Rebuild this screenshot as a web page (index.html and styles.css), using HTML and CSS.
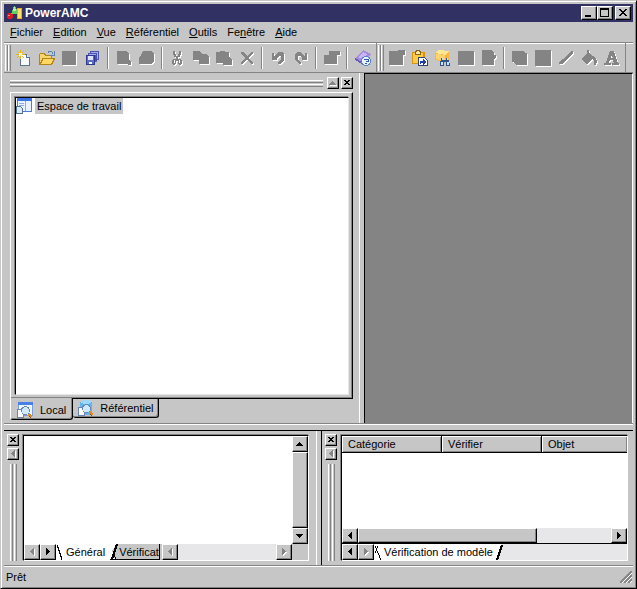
FILE: index.html
```html
<!DOCTYPE html>
<html lang="fr">
<head>
<meta charset="utf-8">
<title>PowerAMC</title>
<link rel="stylesheet" href="styles.css">
</head>
<body>
<svg class="defs" aria-hidden="true">
  <symbol id="left" viewBox="0 0 8 8"><path d="M5 0h1v7H5V6H4V5H3V4H2V3h1V2h1V1h1z"/></symbol>
  <symbol id="right" viewBox="0 0 8 8"><path d="M2 0h1v1h1v1h1v1h1v1H5v1H4v1H3v1H2z"/></symbol>
  <symbol id="up" viewBox="0 0 8 8"><path d="M3 2h1v1h1v1h1v1h1v1H0V5h1V4h1V3h1z"/></symbol>
  <symbol id="down" viewBox="0 0 8 8"><path d="M0 2h7v1H6v1H5v1H4v1H3V5H2V4H1V3H0z"/></symbol>
  <symbol id="cross" viewBox="0 0 8 8"><path d="M1 1h2v1h2V1h2v1H6v1H5v1h1v1h1v1H5V5H3v1H1V5h1V4h1V3H2V2H1z"/></symbol>
  <symbol id="lens" viewBox="0 0 16 16">
    <path fill="#fff" stroke="#6b84b5" d="M.5 7.500h4l2 2v6h-6z"/>
    <circle cx="8.500" cy="8.500" r="4" fill="#cdeaff" stroke="#6b84b5"/>
    <path stroke="#e08a28" stroke-width="3" d="M11.500 12l3 3"/>
    <path stroke="#8c4a10" d="M12 14l2 2"/>
  </symbol>
</svg>
<div class="window">
  <header class="titlebar">
    <svg class="logo" viewBox="0 0 16 16"><circle cx="4" cy="11" r="3.200" fill="#d61c24"/><path d="M2 10h2" stroke="#ff8080"/><path d="M8 1h1l4 8H5z" fill="#63ce63"/><path d="M8 2h1l1 4H7z" fill="#b5efb5"/><path d="M11 3h5v11h-5z" fill="#f7a521"/><path d="M12 4h3v9h-3z" fill="#ffde63"/></svg>
    <h1>PowerAMC</h1>
    <button class="cap" aria-label="Réduire"><svg viewBox="0 0 12 10"><path d="M2 7h6v2H2z"/></svg></button>
    <button class="cap" aria-label="Agrandir"><svg viewBox="0 0 12 10"><path fill-rule="evenodd" d="M1 0h9v9H1z M2 2v6h7V2z"/></svg></button>
    <button class="cap close" aria-label="Fermer"><svg viewBox="0 0 12 10"><path d="M2 1h2v1h1v1h2V2h1V1h2v1H9v1H8v1H7v1h1v1h1v1h1v1H8V7H7V6H5v1H4v1H2V7h1V6h1V5h1V4H4V3H3V2H2z"/></svg></button>
  </header>
  <nav class="menu">
    <a href="#"><u>F</u>ichier</a><a href="#"><u>E</u>dition</a><a href="#"><u>V</u>ue</a><a href="#"><u>R</u>éférentiel</a><a href="#"><u>O</u>utils</a><a href="#">Fe<u>n</u>être</a><a href="#"><u>A</u>ide</a>
  </nav>
  <div class="toolbars">
    <div class="toolbar">
      <span class="grip"></span>
      <button aria-label="Nouveau"><svg viewBox="0 0 16 16"><path d="M4.500 4.500h6l3 3v8h-9z" fill="#f7fbff" stroke="#5a7394"/><path d="M10.500 4.500v3h3" fill="#cfe0f5" stroke="#5a7394"/><path d="M4.500 0v9M0 4.500h9M1 1l7 7M8 1L1 8" stroke="#e5b520"/><path d="M3 3h3v3H3z" fill="#fff7a8"/></svg></button>
      <button aria-label="Ouvrir"><svg viewBox="0 0 16 16"><path d="M.5 14.500v-10l1-1h4l1 2h6v3" fill="#f7d66b" stroke="#b58418"/><path d="M1 14.500l3-6h11.500l-3 6z" fill="#ffd863" stroke="#b58418"/><path d="M9 2.500c2-2 4-1 5 1M15 1v4h-4" fill="none" stroke="#5a84ad"/></svg></button>
      <button disabled aria-label="Enregistrer"><svg viewBox="0 0 16 16"><path d="M0 1h14v14H0z"/></svg></button>
      <button aria-label="Enregistrer tout"><svg viewBox="0 0 16 16"><path d="M5 1h9v9h-2v2h-2v3H1V6h2V3h2z" fill="#5260bd"/><path d="M5.500 1.500h8v8h-2v-6h-6zM3.500 3.500h8v7h-1v-5h-7z" fill="#a5adf2" stroke="#4a52ad"/><path d="M1.500 5.500h8v9h-8z" fill="#5a6bce" stroke="#31398c"/><path d="M3 6h5v4H3z" fill="#dce2ff"/><path d="M4 12h3v2H4z" fill="#fff"/></svg></button>
      <span class="sep"></span>
      <button disabled aria-label="Aperçu"><svg viewBox="0 0 16 16"><path d="M1 1h9l3 3v6l2 2v3h-3v-1H1z"/></svg></button>
      <button disabled aria-label="Imprimer"><svg viewBox="0 0 16 16"><path d="M4 1h9l2 3v8l-3 2H0V7l2-2z"/></svg></button>
      <span class="sep"></span>
      <button disabled aria-label="Couper"><svg viewBox="0 0 16 16"><path d="M3 1h2v3h1v2h2V4h1V1h2v4h-1v2H8v2h3v1h1v4h-1v1H9v-1H8v-3H6v3H5v1H3v-1H2v-4h1V9h3V7H4V5H3zM4 10v3h1v-3zM9 10v3h1v-3z" fill-rule="evenodd"/></svg></button>
      <button disabled aria-label="Copier"><svg viewBox="0 0 16 16"><path d="M0 1h7l2 3h4l3 3v7H6v-4H0z"/></svg></button>
      <button disabled aria-label="Coller"><svg viewBox="0 0 16 16"><path d="M0 2h4V1h5v1h4v5l3 3v5H7v-2H0z"/></svg></button>
      <button disabled aria-label="Supprimer"><svg viewBox="0 0 16 16"><path d="M2 2h2l4 4 4-4h2v1L9.500 8l4.500 5v1h-1L8 9.500 4 14H2v-1l4.500-5L2 3z"/></svg></button>
      <span class="sep"></span>
      <button disabled aria-label="Annuler"><svg viewBox="0 0 16 16"><path d="M2 3h2v3h1l3-4h4l2 2v6l-4 4H8v-1l3-4V6H9L7 8v2H2z"/></svg></button>
      <button disabled aria-label="Rétablir"><svg viewBox="0 0 16 16"><path d="M14 3h-2v3h-1L8 2H4L2 4v6l4 4h2v-1L5 9V6h2l2 2v2h5z"/></svg></button>
      <span class="sep"></span>
      <button disabled aria-label="Propriétés"><svg viewBox="0 0 16 16"><path d="M5 1h11v4h-3v9H0V5h5z"/></svg></button>
      <span class="sep"></span>
      <button aria-label="Aide"><svg viewBox="0 0 16 16"><path d="M0 8l8-8 8 4-7 9z" fill="#a58cde"/><path d="M0 8l9 5v2L0 10z" fill="#635ab5"/><path d="M3 7l5-5 4 2-4 5z" fill="#c8b5f2"/><circle cx="11" cy="11" r="4.500" fill="#e5f2ff" stroke="#5a84ce"/><path d="M9 10V9h4v2h-2v1M10 13.500h2" stroke="#3152ad" fill="none"/></svg></button>
    </div>
    <div class="toolbar">
      <span class="grip"></span>
      <button disabled aria-label="Nouveau diagramme"><svg viewBox="0 0 16 16"><path d="M0 1h9V0h7v5h-2v10H0z"/></svg></button>
      <button aria-label="Coller comme raccourci"><svg viewBox="0 0 16 16"><path d="M0 2h13v12H0z" fill="#d69418"/><path d="M1 3h10v10H1z" fill="#ffcb42"/><path d="M3.500 4.500v-2l1-2h3l1 2v2z" fill="#ffe89c" stroke="#8c6318"/><path d="M6.500 7.500h6l3 3v5h-9z" fill="#fff" stroke="#31427b"/><path d="M8 14v-3h3V9l3 3-3 3v-2H9v1z" fill="#2142a5"/></svg></button>
      <button aria-label="Rechercher un objet"><svg viewBox="0 0 16 16"><path d="M0 3l4-3 10 1v8l-3 3-11-2z" fill="#f7b542"/><path d="M0 3l4-3 10 1-4 4z" fill="#ffe794"/><path d="M1 4l9 1v6L1 9z" fill="#ffd36b"/><path d="M5 14l1-6h2v2h3V8h2l2 6v2h-4v-4h-2v4H5z" fill="#31528c"/><path d="M6 12h2v3H6zM12 12h2v3h-2zM7 8h1v2H7zM12 8h1v2h-1z" fill="#c6e3ff"/></svg></button>
      <button disabled aria-label="Liste"><svg viewBox="0 0 16 16"><path d="M0 1h16v14H0z"/></svg></button>
      <button disabled aria-label="Vérifier"><svg viewBox="0 0 16 16"><path d="M1 0h9l3 3v2h2v2l-2 3v5H1z"/></svg></button>
      <span class="sep"></span>
      <button disabled aria-label="Grouper"><svg viewBox="0 0 16 16"><path d="M0 1h11l2 2h2v12H4l-2-3H0z"/></svg></button>
      <button disabled aria-label="Format"><svg viewBox="0 0 16 16"><path d="M0 0h16v16H0z"/></svg></button>
      <button disabled aria-label="Style de ligne"><svg viewBox="0 0 16 16"><path d="M13 1h2v2L7 12l-3 2H1v-1l2-3 2-1z"/></svg></button>
      <button disabled aria-label="Remplissage"><svg viewBox="0 0 16 16"><path d="M6 0h2v3l7 5 1 3-1 4h-2v-5l-2-1-5 5-6-5 6-6z"/></svg></button>
      <button disabled aria-label="Police"><svg viewBox="0 0 16 16"><path fill-rule="evenodd" d="M6 1h4l4 12h1v2H8v-2h2l-1-3H6l-1 3h2v2H0v-2h2zM8 5L7 8h2z"/></svg></button>
    </div>
  </div>
  <main class="work">
    <aside class="browser">
      <div class="pane-head"><span class="bars"></span><button class="mini dim" aria-label="Replier"><svg><use href="#up"/></svg></button><button class="mini" aria-label="Fermer le volet"><svg><use href="#cross"/></svg></button></div>
      <section class="raised"><div class="tree">
        <svg viewBox="0 0 16 16"><path d="M1.500.5h14v13h-14z" fill="#e8f4ff" stroke="#527bd6"/><path d="M1 0h15v3H1z" fill="#3973e7"/><path d="M9 3v10M3 5.500h5M3 7.500h5" stroke="#8caee7"/><path d="M.5 8.500h4l2 2v5h-6z" fill="#dceaff" stroke="#52739c"/></svg>
        <span>Espace de travail</span>
      </div></section>
      <div class="tabs">
        <button class="tab active"><svg viewBox="0 0 16 16"><path d="M1.500 1.500h14v12h-14z" fill="#f0f7ff" stroke="#7b9cdd"/><path d="M1 0h15v3H1z" fill="#4a7fe7"/><use href="#lens"/></svg>Local</button>
        <button class="tab"><svg viewBox="0 0 16 16"><path d="M2 2q6-4 12 0v12q-6 3-12 0z" fill="#63b5f0"/><path d="M2 2q6-4 12 0-6 4-12 0z" fill="#9cd8ff"/><use href="#lens"/></svg>Référentiel</button>
      </div>
    </aside>
    <div class="mdi"></div>
  </main>
  <div class="docks">
    <section class="dock output">
      <div class="side"><button class="mini" aria-label="Fermer les résultats"><svg><use href="#cross"/></svg></button><button class="mini dim" aria-label="Replier les résultats"><svg><use href="#left"/></svg></button><span class="vbars"></span></div>
      <div class="well">
        <div class="split"><div class="page"></div>
          <div class="vscroll"><button class="sb" aria-label="Haut"><svg><use href="#up"/></svg></button><span class="thumb"></span><button class="sb" aria-label="Bas"><svg><use href="#down"/></svg></button></div></div>
        <div class="sheets">
          <button class="sb dim" aria-label="Onglet précédent"><svg><use href="#left"/></svg></button><button class="sb" aria-label="Onglet suivant"><svg><use href="#right"/></svg></button>
          <button class="sheet on"><svg class="slope" viewBox="0 0 8 15"><path d="M1 0v2h1v3h1v3h1v3h1v3h1" fill="none" stroke="#000"/></svg>Général</button>
          <button class="sheet"><svg class="slope" viewBox="0 0 8 15"><path d="M0 0h7L2 7l3 8H0z" fill="#fff"/><path d="M7 0L2 15" stroke="#000" stroke-width="2"/><path d="M3 8l3 7" stroke="#000"/></svg>Vérificat</button>
          <div class="hscroll"><button class="sb dim" aria-label="Gauche"><svg><use href="#left"/></svg></button><span class="track"></span><button class="sb dim" aria-label="Droite"><svg><use href="#right"/></svg></button></div>
          <span class="corner"></span>
        </div>
      </div>
    </section>
    <section class="dock check">
      <div class="side"><button class="mini" aria-label="Fermer la vérification"><svg><use href="#cross"/></svg></button><button class="mini dim" aria-label="Replier la vérification"><svg><use href="#left"/></svg></button><span class="vbars"></span></div>
      <div class="well">
        <table><thead><tr><th>Catégorie</th><th>Vérifier</th><th>Objet</th></tr></thead></table>
        <div class="page"></div>
        <div class="hscroll main"><button class="sb" aria-label="Vers la gauche"><svg><use href="#left"/></svg></button><span class="thumb"></span><span class="track"></span><button class="sb" aria-label="Vers la droite"><svg><use href="#right"/></svg></button></div>
        <div class="sheets">
          <button class="sb" aria-label="Feuille précédente"><svg><use href="#left"/></svg></button><button class="sb dim" aria-label="Feuille suivante"><svg><use href="#right"/></svg></button>
          <button class="sheet on"><svg class="slope" viewBox="0 0 8 15"><path d="M1 1l6 14M4 1L1 8" stroke="#000" fill="none"/></svg>Vérification de modèle<svg class="slope end" viewBox="0 0 8 15"><path d="M7 0L2 15" stroke="#000" stroke-width="2"/></svg></button>
          <span class="track"></span>
        </div>
      </div>
    </section>
  </div>
  <footer class="status"><span>Prêt</span><svg viewBox="0 0 12 12"><path d="M0 12L12 0M4 12l8-8M8 12l4-4" stroke="#848484" stroke-width="2"/><path d="M2 12L12 2M6 12l6-6M10 12l2-2" stroke="#fff"/></svg></footer>
</div>
</body>
</html>
```

FILE: styles.css
```css
:root {
  --face: #c6c6c6;
  --dark: #848484;
  --light: #ffffff;
  --track: #e7e7e9;
}
* { box-sizing: border-box; }
body { margin: 0; background: var(--face); color: #000; font: 11px/14px "Liberation Sans", Arial, sans-serif; }
button { margin: 0; padding: 0; border: 0; background: var(--face); color: inherit; font: inherit; flex: none; display: flex; align-items: center; justify-content: center; }
svg { display: block; flex: none; shape-rendering: crispEdges; }
.defs { position: absolute; width: 0; height: 0; }

.window {
  min-height: 100vh; display: flex; flex-direction: column; padding: 3px;
  border: 1px solid; border-color: var(--face) #000 #000 var(--face);
  box-shadow: inset 1px 1px var(--light), inset -1px -1px var(--dark);
}
.titlebar { height: 18px; display: flex; align-items: center; background: #313163; color: #fff; padding: 0 2px; }
.logo { width: 16px; height: 16px; }
h1 { flex: 1; margin: 0; padding-left: 3px; font-size: 12px; line-height: 18px; }
.cap, .mini, .sb { border: 1px solid; border-color: var(--light) #000 #000 var(--light); box-shadow: inset -1px -1px var(--dark); }
.cap { width: 16px; height: 14px; }
.cap svg { width: 12px; height: 10px; }
.close { margin-left: 2px; }
.mini { width: 12px; height: 12px; }
.mini svg, .sb svg { width: 8px; height: 8px; }
.sb { width: 16px; height: 16px; }
.dim { border-color: var(--light) #000 #000 var(--light); }
.dim svg { fill: var(--dark); filter: drop-shadow(1px 1px 0 #fff); }

.menu { height: 20px; display: flex; align-items: center; gap: 10px; padding: 0 6px; }
.menu a { color: inherit; text-decoration: none; }

.toolbars { height: 30px; display: flex; border-top: 1px solid var(--dark); box-shadow: inset 0 1px var(--light); overflow: hidden; }
.toolbar { display: flex; align-items: center; border-right: 1px solid var(--dark); padding-right: 2px; }
.toolbar button { width: 23px; height: 24px; background: none; }
.toolbar svg { width: 16px; height: 16px; }
.toolbar button:disabled svg { fill: var(--dark); filter: drop-shadow(1px 1px 0 #fff); }
.grip { width: 6px; height: 26px; margin: 0 1px; border-right: 1px solid var(--dark); background: linear-gradient(90deg, var(--light) 1px, var(--face) 1px 2px, var(--dark) 2px 3px, var(--light) 3px 4px, var(--face) 4px); }
.sep { width: 2px; height: 22px; margin: 0 3px; background: var(--dark); border-right: 1px solid var(--light); }

.work { flex: 1; display: flex; border-top: 1px solid var(--dark); border-bottom: 1px solid var(--dark); }
.browser { flex: 0 1 361px; display: flex; flex-direction: column; padding: 4px 11px 3px 6px; border-right: 1px solid #000; box-shadow: inset -4px 0 var(--face), inset -5px 0 var(--light); }
.pane-head { height: 15px; display: flex; gap: 2px; align-items: flex-start; }
.bars { flex: 1; height: 7px; margin: 3px 2px 0 0; background: linear-gradient(var(--light) 1px, var(--face) 1px 2px, var(--dark) 2px 3px, var(--face) 3px 4px, var(--light) 4px 5px, var(--face) 5px 6px, var(--dark) 6px); }
.raised { flex: 1; display: flex; padding: 3px; border: 1px solid; border-color: var(--light) #000 #000 var(--light); box-shadow: inset -1px -1px var(--dark); }
.tree { flex: 1; display: flex; align-items: flex-start; gap: 3px; background: #fff; border: 1px solid; border-color: #000 #e7e7e7 #e7e7e7 #000; box-shadow: -1px -1px var(--dark); margin: 1px 0 0 1px; }
.tree svg { width: 16px; height: 16px; }
.tree span { background: var(--face); padding: 1px 2px; }
.tabs { display: flex; align-items: flex-start; }
.tab { height: 19px; gap: 6px; padding: 0 4px 0 5px; border: 1px solid #000; border-top: 0; border-left: 0; border-radius: 0 0 3px 3px; box-shadow: inset -1px -1px var(--dark); }
.tab.active { height: 22px; padding: 2px 6px 0; gap: 7px; margin-top: -1px; border-left: 1px solid var(--light); }
.tab svg { width: 16px; height: 16px; }
.mdi { flex: 1; background: var(--dark); border: solid; border-width: 1px 1px 0 0; border-color: #000 var(--light); }

.docks { height: 141px; display: flex; border-top: 1px solid var(--light); }
.dock { display: flex; border-top: 1px solid #000; margin-top: 5px; padding: 3px 5px 4px 3px; }
.output { flex: 0 1 318px; padding-right: 12px; border-right: 1px solid #000; box-shadow: inset -4px 0 var(--face), inset -5px 0 var(--light); }
.check { flex: 1; min-width: 0; }
.side { width: 12px; margin-right: 3px; display: flex; flex-direction: column; gap: 2px; }
.vbars { flex: 1; width: 7px; margin: 2px 2px 0 3px; background: linear-gradient(90deg, var(--light) 1px, var(--face) 1px 2px, var(--dark) 2px 3px, var(--face) 3px 4px, var(--light) 4px 5px, var(--face) 5px 6px, var(--dark) 6px); }
.well { flex: 1; min-width: 0; margin: 1px 0 0 1px; display: flex; flex-direction: column; border: 1px solid; border-color: #000 var(--light) var(--light) #000; box-shadow: -1px -1px var(--dark); }
.split, .page { flex: 1; display: flex; }
.page { background: #fff; min-height: 0; }
.vscroll { width: 16px; display: flex; flex-direction: column; }
.thumb { flex: 1; background: var(--face); border: 1px solid; border-color: var(--light) #000 #000 var(--light); box-shadow: inset -1px -1px var(--dark); }
.sheets, .hscroll { height: 16px; display: flex; }
.track { flex: 1; background: var(--track); }
.hscroll { flex: 1; min-width: 0; }
.hscroll.main { flex: none; border-bottom: 1px solid #000; }
.hscroll.main .sb { height: 15px; }
.hscroll.main .thumb { flex: 0 0 179px; }
.corner { width: 16px; background: var(--face); }
.sheet { height: 16px; gap: 1px; border-bottom: 1px solid #000; border-right: 1px solid #000; margin-right: 2px; }
.sheet.on { background: #fff; gap: 2px; padding-right: 5px; border: 0; margin: 0; }
.sheet.on:has(.end) { padding: 0; background: linear-gradient(105deg, #fff calc(100% - 6px), var(--track) calc(100% - 6px)); }
.slope { width: 8px; height: 15px; }
table { width: 100%; table-layout: fixed; border-collapse: separate; border-spacing: 0; }
th { height: 17px; padding: 1px 6px 0; text-align: left; font-weight: normal; line-height: 13px; background: var(--face); border: solid #000; border-width: 0 1px 1px 0; box-shadow: inset 1px 1px var(--light), inset -1px -1px var(--dark); }
th:nth-child(-n+2) { width: 100px; }
th:last-child { border-right: 0; }

.status { height: 20px; display: flex; justify-content: space-between; align-items: center; border-top: 1px solid var(--dark); box-shadow: inset 0 1px var(--light); padding: 3px 1px 0 2px; }
.status svg { width: 12px; height: 12px; shape-rendering: auto; }
```
